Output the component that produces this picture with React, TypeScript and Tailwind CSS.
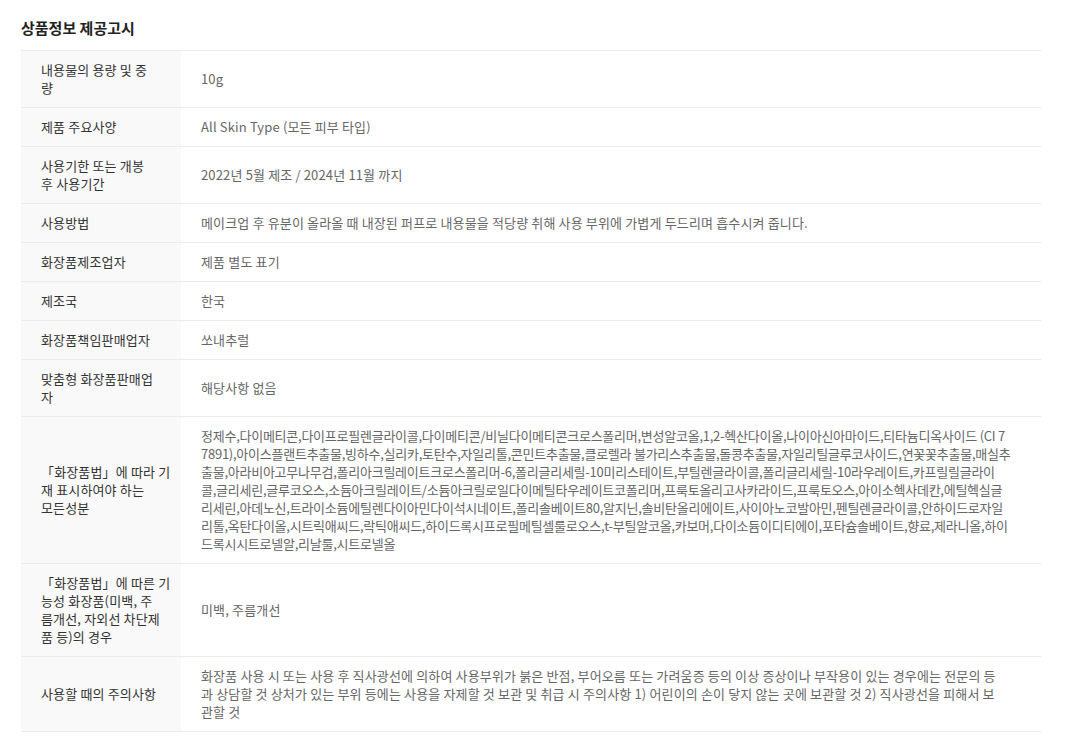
import React from "react";

type Row = { label: string[]; value: string[]; tight?: boolean };

const rows: Row[] = [
  { label: ["내용물의 용량 및 중", "량"], value: ["10g"] },
  { label: ["제품 주요사양"], value: ["All Skin Type (모든 피부 타입)"] },
  { label: ["사용기한 또는 개봉", "후 사용기간"], value: ["2022년 5월 제조 / 2024년 11월 까지"] },
  {
    label: ["사용방법"],
    value: ["메이크업 후 유분이 올라올 때 내장된 퍼프로 내용물을 적당량 취해 사용 부위에 가볍게 두드리며 흡수시켜 줍니다."],
  },
  { label: ["화장품제조업자"], value: ["제품 별도 표기"] },
  { label: ["제조국"], value: ["한국"] },
  { label: ["화장품책임판매업자"], value: ["쏘내추럴"] },
  { label: ["맞춤형 화장품판매업", "자"], value: ["해당사항 없음"] },
  {
    label: ["「화장품법」에 따라 기", "재 표시하여야 하는", "모든성분"],
    tight: true,
    value: [
      "정제수,다이메티콘,다이프로필렌글라이콜,다이메티콘/비닐다이메티콘크로스폴리머,변성알코올,1,2-헥산다이올,나이아신아마이드,티타늄디옥사이드 (CI 7",
      "7891),아이스플랜트추출물,빙하수,실리카,토탄수,자일리톨,콘민트추출물,클로렐라 불가리스추출물,돌콩추출물,자일리틸글루코사이드,연꽃꽃추출물,매실추",
      "출물,아라비아고무나무검,폴리아크릴레이트크로스폴리머-6,폴리글리세릴-10미리스테이트,부틸렌글라이콜,폴리글리세릴-10라우레이트,카프릴릴글라이",
      "콜,글리세린,글루코오스,소듐아크릴레이트/소듐아크릴로일다이메틸타우레이트코폴리머,프룩토올리고사카라이드,프룩토오스,아이소헥사데칸,에틸헥실글",
      "리세린,아데노신,트라이소듐에틸렌다이아민다이석시네이트,폴리솔베이트80,알지닌,솔비탄올리에이트,사이아노코발아민,펜틸렌글라이콜,안하이드로자일",
      "리톨,옥탄다이올,시트릭애씨드,락틱애씨드,하이드록시프로필메틸셀룰로오스,t-부틸알코올,카보머,다이소듐이디티에이,포타슘솔베이트,향료,제라니올,하이",
      "드록시시트로넬알,리날룰,시트로넬올",
    ],
  },
  {
    label: ["「화장품법」에 따른 기", "능성 화장품(미백, 주", "름개선, 자외선 차단제", "품 등)의 경우"],
    value: ["미백, 주름개선"],
  },
  {
    label: ["사용할 때의 주의사항"],
    value: [
      "화장품 사용 시 또는 사용 후 직사광선에 의하여 사용부위가 붉은 반점, 부어오름 또는 가려움증 등의 이상 증상이나 부작용이 있는 경우에는 전문의 등",
      "과 상담할 것 상처가 있는 부위 등에는 사용을 자제할 것 보관 및 취급 시 주의사항 1) 어린이의 손이 닿지 않는 곳에 보관할 것 2) 직사광선을 피해서 보",
      "관할 것",
    ],
  },
];

export default function App() {
  return (
    <div
      className="min-h-[740px] w-full bg-white pl-[21px] pt-[18px]"
      style={{ fontFamily: '"Noto Sans CJK KR", "Noto Sans", sans-serif' }}
    >
      <h2 className="text-[15px] font-bold leading-[20px] text-[#222222]">상품정보 제공고시</h2>
      <div className="mt-[12px] w-[1020px] border-t border-[#ebebeb]">
        {rows.map((r, i) => (
          <div key={i} className="flex border-b border-[#ebebeb]">
            <div className="flex w-[160px] shrink-0 items-center bg-[#f9f9f9] py-[10px] pl-[20px] pr-[10px] text-[13px] leading-[18px] tracking-[0.15px] text-[#333333]">
              <div>
                {r.label.map((l, j) => (
                  <div key={j} className="whitespace-nowrap">
                    {l}
                  </div>
                ))}
              </div>
            </div>
            <div
              className={
                r.tight
                  ? "flex flex-1 items-center py-[10px] pl-[20px] pr-[20px] text-[13px] leading-[18px] tracking-[-0.25px] text-[#666666]"
                  : "flex flex-1 items-center py-[10px] pl-[20px] pr-[20px] text-[13px] leading-[18px] tracking-[0.15px] text-[#666666]"
              }
            >
              <div>
                {r.value.map((v, j) => (
                  <div key={j} className="whitespace-nowrap">
                    {v}
                  </div>
                ))}
              </div>
            </div>
          </div>
        ))}
      </div>
    </div>
  );
}
